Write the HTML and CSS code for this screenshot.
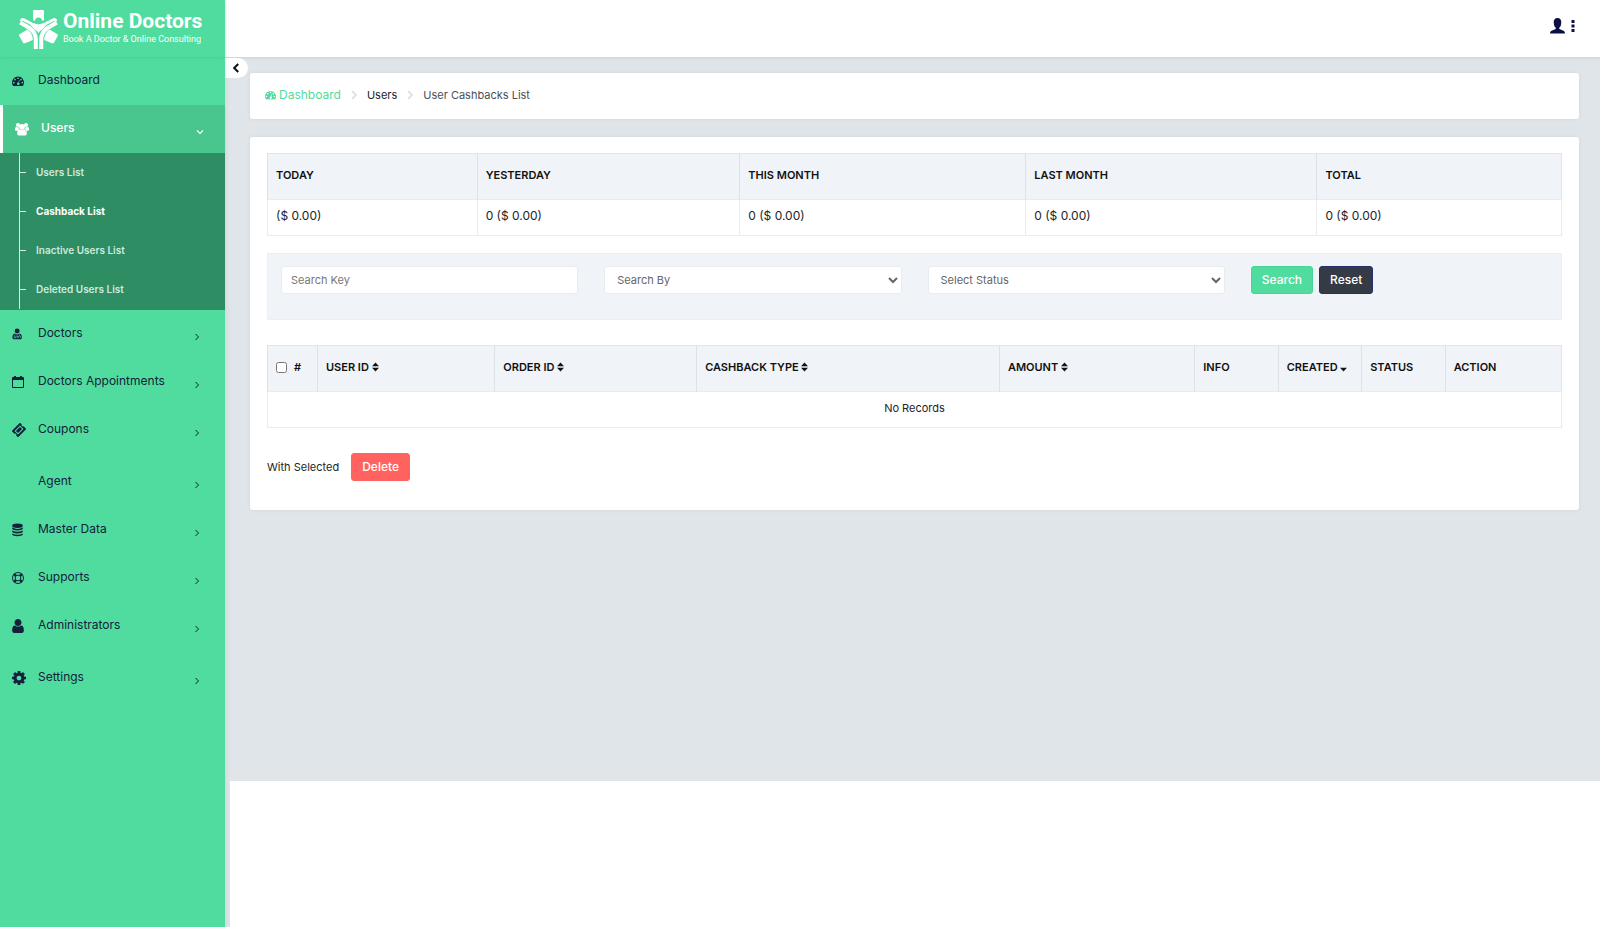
FILE: index.html
```html
<!DOCTYPE html>
<html lang="en">
<head>
<meta charset="utf-8">
<meta name="viewport" content="width=device-width, initial-scale=1">
<title>User Cashbacks List</title>
<link rel="stylesheet" href="styles.css">
</head>
<body>
<svg class="sprite" aria-hidden="true">
  <symbol id="i-gauge" viewBox="0 0 14 12"><path fill-rule="evenodd" d="M7 .8a7 7 0 0 0-7 7c0 1.300.4 2.600 1.100 3.700.1.200.3.300.5.300h10.800c.2 0 .4-.1.500-.3A7 7 0 0 0 7 .8zM2 6.800a1 1 0 1 1 0 2 1 1 0 0 1 0-2zm1.500-3.500a1 1 0 1 1 0 2 1 1 0 0 1 0-2zM7 1.800a1 1 0 1 1 0 2 1 1 0 0 1 0-2zm3.500 1.500a1 1 0 1 1 0 2 1 1 0 0 1 0-2zM12 6.800a1 1 0 1 1 0 2 1 1 0 0 1 0-2zM8.300 4.800l.6.200-.8 3a1.500 1.500 0 1 1-.7-.2z"/></symbol>
  <symbol id="i-chev" viewBox="0 0 6 8"><path d="M1.500 1l3 3-3 3" fill="none" stroke="currentColor" stroke-width="1"/></symbol>
  <symbol id="i-down" viewBox="0 0 8 6"><path d="M1 1.500l3 3 3-3" fill="none" stroke="currentColor" stroke-width="1.200"/></symbol>
  <symbol id="i-sep" viewBox="0 0 8 10"><path d="M2 1l4 4-4 4" fill="none" stroke="currentColor" stroke-width="2"/></symbol>
  <symbol id="i-sort" viewBox="0 0 7 10"><path d="M0 4.300L3.500.5 7 4.300zM0 5.700h7L3.500 9.500z"/></symbol>
  <symbol id="i-desc" viewBox="0 0 7 10"><path d="M0 5.700h7L3.500 9.500z"/></symbol>
</svg>
<div class="app">
  <aside class="sidebar">
    <a class="brand" href="#">
      <svg class="brand-mark" viewBox="0 0 39 39" aria-hidden="true">
        <path d="M14 1.200Q14 0 15.200 0h8.600Q25 0 25 1.200V10l-2 1a3.500 3.500 0 0 0-7 0l-2-1z"/>
        <path d="M1.800 11.200l.9-1.400q.6-.9 1.600-.3L13 14q6.500 3 13 0l8.700-4.500q1-.6 1.600.3l.9 1.400" fill="none" stroke="currentColor" stroke-width="2.600"/>
        <path d="M1.200 12.600l9.300 5.400q6.300 4 6.300 12V39M37.800 12.600l-9.300 5.400q-6.300 4-6.300 12V39" fill="none" stroke="currentColor" stroke-width="4"/>
        <path d="M11 14.500q8.500 3.500 17 0L23 19.500q-2.500 1.500-3.500 3.500-1-2-3.500-3.500z"/>
        <circle cx="19.500" cy="11.300" r="2.900" fill="#4fdc9e"/>
        <path d="M8.500 19.500q5.300 3.800 5.300 10.500L6 33.200q-1.400.4-2.100-.8L.3 26q-.6-1.300.6-2zM30.500 19.500q-5.300 3.800-5.300 10.500l7.800 3.200q1.400.4 2.100-.8l3.600-6.400q.6-1.300-.6-2z"/>
      </svg>
      <span class="brand-text"><span class="brand-name">Online Doctors</span><span class="brand-tag">Book A Doctor &amp; Online Consulting</span></span>
    </a>
    <nav class="nav" aria-label="Main">
      <a class="nav-item" href="#"><svg class="nav-icon" viewBox="0 0 14 14"><use href="#i-gauge"/></svg><span>Dashboard</span></a>
      <a class="nav-item active" href="#"><svg class="nav-icon large" viewBox="0 0 14 14"><circle cx="3" cy="3" r="2.100"/><circle cx="11" cy="3" r="2.100"/><circle cx="7" cy="4.800" r="2.900"/><path d="M0 8.500V6.500Q0 5 1.200 5L4 5.500 3.500 9zM14 8.500V6.500Q14 5 12.800 5L10 5.500l.5 3.500zM2.200 11.500Q2.200 7.800 4.700 7.300q2.300 1 4.600 0 2.500.5 2.500 4.200 0 1.900-1.600 1.900H3.800q-1.600 0-1.600-1.900z"/></svg><span>Users</span><svg class="nav-arrow down"><use href="#i-down"/></svg></a>
      <div class="subnav">
        <a href="#">Users List</a>
        <a class="current" href="#">Cashback List</a>
        <a href="#">Inactive Users List</a>
        <a href="#">Deleted Users List</a>
      </div>
      <a class="nav-item" href="#"><svg class="nav-icon small" viewBox="0 0 14 16"><circle cx="6" cy="4.500" r="2.900"/><path fill-rule="evenodd" d="M1.500 14Q.5 13.500.5 12q0-3.800 2.700-4.500Q6 9.500 8.800 7.500q2.700.7 2.700 4.500 0 1.500-1 2zM3 9v2l-1 .8V13h.7v-.9l.6-.5.7.5v.9h.7v-1.200l-1-.8V9zM8.500 8.500V10Q7 10.300 7 12v.8h.7V12q0-1.300 1.100-1.300T9.900 12v.8h.7V12q0-1.700-1.400-2V8.500zM6 9.500l-.8.7.8 3.300.8-3.300z"/></svg><span>Doctors</span><svg class="nav-arrow"><use href="#i-chev"/></svg></a>
      <a class="nav-item" href="#"><svg class="nav-icon" viewBox="1 0 12 14"><path fill-rule="evenodd" d="M2 2h1V1h2v1h4V1h2v1h1q1 0 1 1v9q0 1-1 1H2q-1 0-1-1V3q0-1 1-1zM2 5v7h10V5z"/></svg><span>Doctors Appointments</span><svg class="nav-arrow"><use href="#i-chev"/></svg></a>
      <a class="nav-item tall" href="#"><svg class="nav-icon large" viewBox="1 1 14 14"><path fill-rule="evenodd" d="M9.600 1.200l1.200 1.200a1.300 1.300 0 0 0 1.800 1.800L14.800 6.400q.6.600 0 1.200L7.600 14.800q-.6.600-1.200 0L5.200 13.600a1.300 1.300 0 0 0-1.800-1.800L1.200 9.600q-.6-.6 0-1.200L8.400 1.200q.6-.6 1.200 0zM9 3.500L3.500 9 7 12.500 12.500 7zM9 4.900L11.100 7 7 11.100 4.900 9z"/></svg><span>Coupons</span><svg class="nav-arrow"><use href="#i-chev"/></svg></a>
      <a class="nav-item" href="#"><span class="nav-icon"></span><span>Agent</span><svg class="nav-arrow"><use href="#i-chev"/></svg></a>
      <a class="nav-item" href="#"><svg class="nav-icon small" viewBox="0 0 12 14"><ellipse cx="5.500" cy="2.700" rx="5.300" ry="2.200"/><path d="M.2 4.600q5.300 2.600 10.600 0v1.200Q9.800 7.500 5.500 7.500T.2 5.800zM.2 7.500q5.300 2.600 10.600 0v1.200q-1 1.700-5.300 1.700T.2 8.700zM.2 10.400q5.300 2.600 10.600 0v1.200q-1 1.700-5.300 1.700T.2 11.600z"/></svg><span>Master Data</span><svg class="nav-arrow"><use href="#i-chev"/></svg></a>
      <a class="nav-item" href="#"><svg class="nav-icon" viewBox="1 1 12 12"><g fill="none" stroke="currentColor"><circle cx="7" cy="7" r="5.500"/><circle cx="7" cy="7" r="2.900"/><path stroke-width="2.400" d="M2.900 2.900l2 2M11.100 2.900l-2 2M2.900 11.100l2-2M11.100 11.100l-2-2"/></g></svg><span>Supports</span><svg class="nav-arrow"><use href="#i-chev"/></svg></a>
      <a class="nav-item tall" href="#"><svg class="nav-icon" viewBox="256 128 1280 1536"><path d="M1536 1399q0 109-62.500 187t-150.500 78h-854q-88 0-150.500-78t-62.500-187q0-85 8.500-160.500t31.500-152 58.500-131 94-89 134.500-34.500q131 128 313 128t313-128q76 0 134.500 34.500t94 89 58.500 131 31.500 152 8.500 160.500zm-256-887q0 159-112.500 271.500t-271.500 112.500-271.500-112.500-112.500-271.500 112.500-271.500 271.500-112.500 271.500 112.500 112.500 271.500z"/></svg><span>Administrators</span><svg class="nav-arrow"><use href="#i-chev"/></svg></a>
      <a class="nav-item" href="#"><svg class="nav-icon large" viewBox="128 128 1536 1536"><path d="M1152 896q0-106-75-181t-181-75-181 75-75 181 75 181 181 75 181-75 75-181zm512-109v222q0 12-8 23t-20 13l-185 28q-19 54-39 91 35 50 107 138 10 12 10 25t-9 23q-27 37-99 108t-94 71q-12 0-26-9l-138-108q-44 23-91 38-16 136-29 186-7 28-36 28h-222q-14 0-24.500-8.500t-11.500-21.500l-28-184q-49-16-90-37l-141 107q-10 9-25 9-14 0-25-11-126-114-165-168-7-10-7-23 0-12 8-23 15-21 51-66.500t54-70.500q-27-50-41-99l-183-27q-13-2-21-12.500t-8-23.500v-222q0-12 8-23t19-13l186-28q14-46 39-92-40-57-107-138-10-12-10-24 0-10 9-23 26-36 98.500-107.500t94.500-71.500q13 0 26 10l138 107q44-23 91-38 16-136 29-186 7-28 36-28h222q14 0 24.500 8.500t11.500 21.500l28 184q49 16 90 37l142-107q9-9 24-9 13 0 25 10 129 119 165 170 7 8 7 22 0 12-8 23-15 21-51 66.500t-54 70.500q26 50 41 98l183 28q13 2 21 12.500t8 23.500z"/></svg><span>Settings</span><svg class="nav-arrow"><use href="#i-chev"/></svg></a>
    </nav>
  </aside>
  <div class="page">
    <header class="topbar">
      <button class="account" type="button" aria-label="Account menu">
        <svg class="account-user" viewBox="0 0 15 16"><path d="M7.500 0Q11.300 0 11.300 4.500 11.300 8 9.300 9.700V11l4.200 1.700Q15 13.300 15 15.500H0q0-2.200 1.500-2.800L5.700 11V9.700Q3.700 8 3.700 4.500 3.700 0 7.500 0z"/></svg>
        <svg class="account-dots" viewBox="0 0 4 12"><path d="M.5 0h3v3h-3zM.5 4.500h3v3h-3zM.5 9h3v3h-3z"/></svg>
      </button>
    </header>
    <main class="content">
      <button class="collapse" type="button" aria-label="Collapse menu"><svg viewBox="0 0 6 10"><path d="M5.200 1l-4 4 4 4" fill="none" stroke="currentColor" stroke-width="2"/></svg></button>
      <nav class="card crumbs" aria-label="Breadcrumb">
        <a class="crumb-home" href="#"><svg viewBox="0 0 14 12"><use href="#i-gauge"/></svg>Dashboard</a>
        <svg class="crumb-sep"><use href="#i-sep"/></svg>
        <a class="crumb-link" href="#">Users</a>
        <svg class="crumb-sep"><use href="#i-sep"/></svg>
        <span class="crumb-now">User Cashbacks List</span>
      </nav>
      <section class="card panel">
        <table class="grid">
          <colgroup><col class="s1"><col class="s2"><col class="s3"><col class="s4"><col class="s5"></colgroup>
          <thead><tr><th>TODAY</th><th>YESTERDAY</th><th>THIS MONTH</th><th>LAST MONTH</th><th>TOTAL</th></tr></thead>
          <tbody><tr><td>($ 0.00)</td><td>0 ($ 0.00)</td><td>0 ($ 0.00)</td><td>0 ($ 0.00)</td><td>0 ($ 0.00)</td></tr></tbody>
        </table>
        <form class="filters">
          <input class="field" type="text" placeholder="Search Key" aria-label="Search Key">
          <select class="field pick" aria-label="Search By"><option>Search By</option></select>
          <select class="field pick" aria-label="Select Status"><option>Select Status</option></select>
          <div class="actions">
            <button class="btn primary" type="button">Search</button>
            <button class="btn dark" type="reset">Reset</button>
          </div>
        </form>
        <table class="grid records">
          <colgroup><col class="c1"><col class="c2"><col class="c3"><col class="c4"><col class="c5"><col class="c6"><col class="c6"><col class="c6"><col class="c7"></colgroup>
          <thead><tr>
            <th><label class="check"><input type="checkbox">#</label></th>
            <th>USER ID <svg class="sort"><use href="#i-sort"/></svg></th>
            <th>ORDER ID <svg class="sort"><use href="#i-sort"/></svg></th>
            <th>CASHBACK TYPE <svg class="sort"><use href="#i-sort"/></svg></th>
            <th>AMOUNT <svg class="sort"><use href="#i-sort"/></svg></th>
            <th>INFO</th>
            <th>CREATED <svg class="sort"><use href="#i-desc"/></svg></th>
            <th>STATUS</th>
            <th>ACTION</th>
          </tr></thead>
          <tbody><tr><td class="empty" colspan="9">No Records</td></tr></tbody>
        </table>
        <div class="bulk"><span>With Selected</span><button class="btn danger" type="button">Delete</button></div>
      </section>
    </main>
    <div class="foot"></div>
  </div>
</div>
</body>
</html>
```

FILE: styles.css
```css
* { box-sizing: border-box; }
body { margin: 0; font: 12px/18px Inter, "Open Sans", sans-serif; color: #212529; background: #fff; }
a { text-decoration: none; color: inherit; }
svg { fill: currentColor; flex: none; }
button, input, select { font: inherit; }
.sprite { position: absolute; width: 0; height: 0; }

.app { display: flex; min-height: 100vh; background: #e0e5e9; }

.sidebar { width: 225px; flex: none; background: #4fdc9e; color: #14213d; box-shadow: 0 0 5px rgba(40, 60, 80, .15); z-index: 2; }
.brand { display: flex; align-items: center; gap: 5px; height: 57px; padding: 1px 0 0 19px; color: #fff; box-shadow: 0 1px 3px rgba(0, 0, 0, .06); }
.brand-mark { width: 39px; height: 39px; }
.brand-text { display: flex; flex-direction: column; font-family: Roboto, sans-serif; white-space: nowrap; }
.brand-name { font-size: 21px; font-weight: 700; line-height: 20px; }
.brand-tag { font-size: 9px; font-weight: 400; line-height: 16px; }

.nav-item { display: flex; align-items: center; gap: 12px; height: 48px; padding: 0 25px 2px 12px; font-size: 12px; }
.nav-item.tall { height: 52px; padding-bottom: 6px; }
.nav-item.active { background: #48c68e; color: #fff; font-weight: 500; border-left: 3px solid #fff; }
.nav-icon { width: 12px; height: 14px; margin: 1px 2px 0 0; }
.nav-icon.large { width: 14px; margin-right: 0; }
.nav-arrow { width: 6px; height: 8px; margin: 8px 0 0 auto; }
.nav-arrow.down { width: 8px; height: 6px; margin-right: -4px; }

.subnav { background: #2f8d64; color: #cdeadd; padding: 0 0 1px 19px; font-size: 10px; font-weight: 600; }
.subnav a { display: flex; align-items: center; gap: 10px; height: 39px; padding-bottom: 1px; border-left: 1px solid #d5efe2; }
.subnav a::before { content: ""; width: 6px; height: 1px; background: #d5efe2; }
.subnav .current { color: #fff; font-weight: 700; }

.page { display: flex; flex-direction: column; flex: 1; min-width: 0; }
.topbar { display: flex; justify-content: flex-end; align-items: center; height: 57px; padding: 0 25px 6px; background: #fff; box-shadow: 0 1px 3px rgba(40, 60, 80, .12); }
.account { display: flex; align-items: center; gap: 6px; padding: 0; border: 0; background: none; color: #0a1045; }
.account-user { width: 15px; height: 16px; }
.account-dots { width: 4px; height: 12px; }

.content { position: relative; flex: 1; padding: 16px 21px 24px 25px; }
.collapse { position: absolute; left: 0; top: 1px; display: flex; align-items: center; width: 23px; height: 20px; padding: 0 0 0 8px; border: 0; border-radius: 0 10px 10px 0; background: #fff; color: #111; }
.collapse svg { width: 6px; height: 10px; }
.card { background: #fff; border-radius: 3px; box-shadow: 0 0 4px rgba(40, 60, 80, .08); }
.crumbs { display: flex; align-items: center; gap: 9px; height: 46px; padding: 0 15px 2px; margin-bottom: 18px; font-size: 11px; }
.crumb-home { display: flex; align-items: center; gap: 3px; color: #4fdc9e; font-size: 12px; }
.crumb-home svg { width: 11px; height: 10px; }
.crumb-sep { width: 8px; height: 10px; color: #dbe4f0; }
.crumb-now { color: #495057; }

.panel { padding: 16px 17px 29px; }
.grid { width: 100%; table-layout: fixed; border-collapse: collapse; border: 1px solid #e2e5e8; }
.grid th { height: 46px; padding: 0 8px 3px; text-align: left; font-size: 11px; font-weight: 600; color: #111; background: #f0f4f9; border-left: 1px solid #dee2e6; white-space: nowrap; }
.grid td { height: 36px; padding: 0 8px 4px; border: 1px solid #e8ecf0; }
.grid .empty { text-align: center; font-size: 11px; }
.s1 { width: 16.2%; } .s2 { width: 20.3%; } .s3 { width: 22.1%; } .s4 { width: 22.5%; }
.c1 { width: 50px; } .c2 { width: 13.7%; } .c3 { width: 15.6%; } .c4 { width: 23.4%; } .c5 { width: 15.1%; } .c6 { width: 6.45%; }
.sort { width: 7px; height: 10px; vertical-align: -1px; }
.check { display: flex; align-items: center; gap: 7px; }
.check input { width: 11px; height: 11px; margin: 0; }

.filters { display: grid; grid-template-columns: repeat(4, 1fr); gap: 26px; align-items: start; margin: 17px 0 25px; padding: 12px 13px 25px; background: #f0f4f9; border: 1px solid #ebeff3; }
.field { width: 100%; height: 28px; padding: 0 9px; border: 1px solid #e9ecef; border-radius: 3px; background: #fff; color: #666; font-size: 11px; }
.field::placeholder { color: #777; }
.pick { padding: 0 0 0 8px; }
.actions { display: flex; gap: 6px; }
.btn { height: 28px; padding: 0 10px; border: 1px solid; border-radius: 3px; color: #fff; font-weight: 500; }
.primary { background: #4fdc9e; border-color: #45d795; }
.dark { background: #343a46; border-color: #25306b; }
.danger { background: #ff625f; border-color: #ff625f; }
.bulk { display: flex; align-items: center; gap: 12px; margin-top: 25px; font-size: 11px; }
.bulk .btn { font-size: 12px; }

.foot { min-height: 146px; margin-left: 5px; background: #fff; }
```
